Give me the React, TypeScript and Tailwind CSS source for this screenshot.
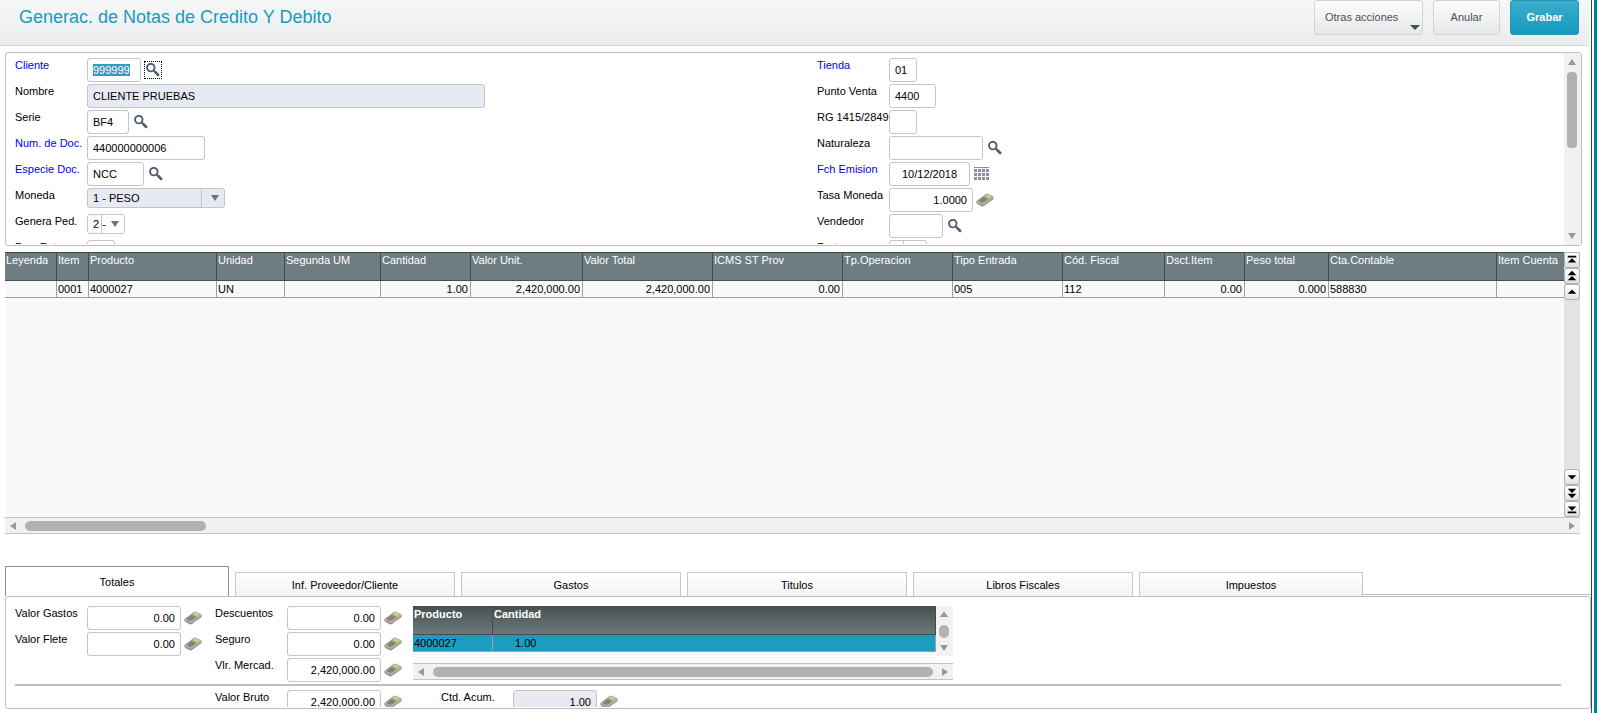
import { useEffect, useRef, useState } from "react";
import type { ReactNode } from "react";

const inputBase =
    "h-6 rounded-[3px] border border-[#c3c5c6] px-[5px] text-[11px] leading-[15px] text-black outline-none selection:bg-[#349db9] selection:text-white";

const SearchIcon = () => (
    <svg width="14" height="14" viewBox="0 0 14 14" fill="none">
        <circle cx="4.8" cy="4.6" r="3.8" stroke="#4f5b6e" strokeWidth="1.8" />
        <path d="M7.6 7.4L9.4 9.2" stroke="#4f5b6e" strokeWidth="1.8" />
        <path d="M9.2 9L12.2 12" stroke="#4f5b6e" strokeWidth="2.5" strokeLinecap="round" />
    </svg>
);

const CalendarIcon = () => (
    <svg width="16" height="14" viewBox="0 0 16 14" fill="#8b919e" shapeRendering="crispEdges">
        <rect x="0" y="0" width="15" height="1" />
        {[2, 6, 10].map((y) =>
            [0, 4, 8, 12].map((x) => <rect key={`${x}-${y}`} x={x} y={y} width="3" height="3" />)
        )}
    </svg>
);

const CalcIcon = () => (
    <svg width="18" height="14" viewBox="0 0 18 14">
        <path d="M0.4 8.2Q0.1 10.3 1.4 11L5.6 13.2Q6.8 13.7 8 12.9L16.9 6.4Q17.9 5.6 17.7 4.2L12 2Z" fill="#8a837c" />
        <path d="M0.9 7.4L9.4 1Q10.6 0.2 12 0.7L16.9 2.9Q18.1 3.5 17.1 4.4L8 11Q7 11.6 5.9 11.1L1 9Q-0.1 8.3 0.9 7.4Z" fill="#b9b0a6" />
        <path d="M1.9 7.8L7.6 3.6L12.9 6L7.1 10.1Z" fill="#948a80" />
        <path d="M8.6 3.4L11 1.6L15.8 3.7L13.2 5.5Z" fill="#9ed363" />
        <path d="M10.6 2.5L14 4" stroke="#d3f3a2" strokeWidth="1" />
        <path d="M3.4 8L7 9.5M5 6.8L8.8 8.4M6.6 5.6L10.4 7.2" stroke="#6a6058" strokeWidth="0.7" strokeDasharray="1.2 0.6" />
        <path d="M1 9.6L5.8 11.8Q7 12.3 8 11.6L16.8 5.2" stroke="#d2ccc5" strokeWidth="0.6" fill="none" />
    </svg>
);

const Arrow = ({ dir, className = "" }: { dir: "up" | "down" | "left" | "right"; className?: string }) => {
    const paths = {
        up: "M4 1L8 7H0Z",
        down: "M0 1H8L4 7Z",
        left: "M7 0V8L1 4Z",
        right: "M1 0L7 4L1 8Z",
    };
    return (
        <svg width="8" height="8" viewBox="0 0 8 8" className={`shrink-0 ${className}`}>
            <path d={paths[dir]} fill="currentColor" />
        </svg>
    );
};

interface FieldProps {
    id: string;
    label: string;
    value?: string;
    width: string;
    required?: boolean;
    align?: string;
    readOnly?: boolean;
    children?: ReactNode;
}

const Field = ({ id, label, value = "", width, required, align = "", readOnly, children }: FieldProps) => (
    <div className="flex h-6 shrink-0 items-center">
        <label
            htmlFor={id}
            className={`w-[72px] shrink-0 self-start whitespace-nowrap leading-[14px] ${required ? "text-[#0000f0]" : ""}`}
        >
            {label}
        </label>
        <input
            id={id}
            defaultValue={value}
            readOnly={readOnly}
            className={`${inputBase} ${width} ${align} ${readOnly ? "bg-[#e7eaf3]" : "bg-white"}`}
        />
        {children}
    </div>
);

interface SelectFieldProps {
    id: string;
    label: string;
    options: string[];
    width: string;
    disabled?: boolean;
}

const SelectField = ({ id, label, options, width, disabled }: SelectFieldProps) => (
    <div className="flex h-6 shrink-0">
        <label htmlFor={id} className="w-[72px] shrink-0 whitespace-nowrap leading-[14px]">
            {label}
        </label>
        <div className={`relative h-5 ${width}`}>
            <select
                id={id}
                disabled={disabled}
                className={`h-5 w-full appearance-none rounded-[3px] border border-[#c3c5c6] pl-[5px] text-[11px] text-black opacity-100 outline-none ${disabled ? "bg-[#e7eaf3]" : "bg-white"}`}
            >
                {options.map((o) => (
                    <option key={o}>{o}</option>
                ))}
            </select>
            <span className="pointer-events-none absolute inset-y-0 right-[23px] w-px bg-[#c3c5c6]" />
            <Arrow dir="down" className="pointer-events-none absolute right-[6px] top-[6px] text-[#6a7180]" />
        </div>
    </div>
);

const IconButton = ({ label, className = "ml-[5px]", children }: { label: string; className?: string; children: ReactNode }) => (
    <button type="button" aria-label={label} className={`flex shrink-0 items-center justify-center ${className}`}>
        {children}
    </button>
);

const Calc = () => (
    <IconButton label="Calculadora" className="ml-[3px]">
        <CalcIcon />
    </IconButton>
);

const Search = () => (
    <IconButton label="Buscar">
        <SearchIcon />
    </IconButton>
);

const columns = [
    { title: "Leyenda", width: "w-[52px]", value: "" },
    { title: "Item", width: "w-[32px]", value: "0001" },
    { title: "Producto", width: "w-[128px]", value: "4000027" },
    { title: "Unidad", width: "w-[68px]", value: "UN" },
    { title: "Segunda UM", width: "w-[96px]", value: "" },
    { title: "Cantidad", width: "w-[90px]", value: "1.00", right: true },
    { title: "Valor Unit.", width: "w-[112px]", value: "2,420,000.00", right: true },
    { title: "Valor Total", width: "w-[130px]", value: "2,420,000.00", right: true },
    { title: "ICMS ST Prov", width: "w-[130px]", value: "0.00", right: true },
    { title: "Tp.Operacion", width: "w-[110px]", value: "" },
    { title: "Tipo Entrada", width: "w-[110px]", value: "005" },
    { title: "Cód. Fiscal", width: "w-[102px]", value: "112" },
    { title: "Dsct.Item", width: "w-[80px]", value: "0.00", right: true },
    { title: "Peso total", width: "w-[84px]", value: "0.000", right: true },
    { title: "Cta.Contable", width: "w-[168px]", value: "588830" },
    { title: "Item Cuenta", width: "", value: "" },
];

const navIcons: Record<string, string> = {
    Primero: "M3 2h10v2H3zM8 5l5 5H3z",
    "Página anterior": "M8 1l5 5H3zM8 7l5 5H3z",
    Anterior: "M8 4l5 5H3z",
    Siguiente: "M3 5h10l-5 5z",
    "Página siguiente": "M3 2h10l-5 5zM3 8h10l-5 5z",
    "Último": "M3 4h10l-5 5zM3 10h10v2H3z",
};

const NavButton = ({ name }: { name: string }) => (
    <button
        type="button"
        aria-label={name}
        className="flex h-4 w-4 items-center justify-center rounded-[3px] border border-[#b0b0b0] bg-linear-to-b from-white to-[#e2e2e2]"
    >
        <svg width="12" height="12" viewBox="1 0 14 14">
            <path d={navIcons[name]} fill="#000" />
        </svg>
    </button>
);

const tabs = [
    { name: "Totales", width: "w-[224px]" },
    { name: "Inf. Proveedor/Cliente", width: "w-[220px]" },
    { name: "Gastos", width: "w-[220px]" },
    { name: "Titulos", width: "w-[220px]" },
    { name: "Libros Fiscales", width: "w-[220px]" },
    { name: "Impuestos", width: "w-[224px]" },
];

const App = () => {

    const [tab, setTab] = useState("Totales");
    const clienteRef = useRef<HTMLInputElement>(null);

    useEffect(() => {
        clienteRef.current?.focus();
        clienteRef.current?.select();
    }, []);

    return (
        <div className="flex h-screen overflow-hidden bg-white font-['Liberation_Sans',Arial,sans-serif] text-[11px] text-black">

            <main className="flex min-w-0 flex-1 flex-col">

                <header className="mr-[2px] flex h-[46px] shrink-0 items-start justify-between border-b border-[#d5d6d7] bg-linear-to-b from-[#f6f7f7] to-[#ebecee] pl-[19px] pr-[10px]">
                    <h1 className="pt-[5px] text-[18px] leading-6 text-[#179bbf]">
                        Generac. de Notas de Credito Y Debito
                    </h1>
                    <div className="flex gap-[10px]">
                        <button type="button" className="relative h-[35px] w-[109px] rounded-[3px] border border-[#d0d2d4] bg-linear-to-b from-[#fdfdfd] to-[#e6e7e8] pl-[10px] text-left text-[#4c5057]">
                            Otras acciones
                            <svg width="10" height="5" viewBox="0 0 10 5" className="absolute bottom-1 right-[2px]">
                                <path d="M0 0H10L5 5Z" fill="#454b57" />
                            </svg>
                        </button>
                        <button type="button" className="h-[35px] w-[67px] rounded-[3px] border border-[#d0d2d4] bg-linear-to-b from-[#fdfdfd] to-[#e6e7e8] text-[#4c5057]">
                            Anular
                        </button>
                        <button type="button" className="h-[35px] w-[69px] rounded-[3px] border border-[#2196b6] bg-linear-to-b from-[#3aadcb] to-[#0f9bbf] font-bold text-white">
                            Grabar
                        </button>
                    </div>
                </header>

                <section className="ml-[5px] mr-[9px] mt-[6px] flex h-[194px] shrink-0 rounded-[3px] border border-[#bfbfbf]">
                    <div className="grid min-w-0 flex-1 grid-cols-[802fr_747fr] overflow-hidden pl-[9px] pt-[5px]">
                        <div className="flex h-[186px] flex-col gap-[2px] overflow-hidden">
                            <div className="flex h-6 shrink-0 items-center">
                                <label htmlFor="cliente" className="w-[72px] shrink-0 self-start leading-[14px] text-[#0000f0]">
                                    Cliente
                                </label>
                                <input id="cliente" ref={clienteRef} defaultValue="999999" className={`${inputBase} w-[54px] bg-white`} />
                                <IconButton label="Buscar" className="ml-[3px] h-[18px] w-[18px] border border-dotted border-black">
                                    <SearchIcon />
                                </IconButton>
                            </div>
                            <Field id="nombre" label="Nombre" value="CLIENTE PRUEBAS" width="w-[398px]" readOnly />
                            <Field id="serie" label="Serie" value="BF4" width="w-[42px]"><Search /></Field>
                            <Field id="numdoc" label="Num. de Doc." value="440000000006" width="w-[118px]" required />
                            <Field id="especie" label="Especie Doc." value="NCC" width="w-[57px]" required><Search /></Field>
                            <SelectField id="moneda" label="Moneda" options={["1 - PESO"]} width="w-[138px]" disabled />
                            <SelectField id="generaped" label="Genera Ped." options={["2 - "]} width="w-[38px]" />
                            <Field id="prov" label="Prov.Entrega" width="w-[28px]" />
                        </div>
                        <div className="flex h-[186px] flex-col gap-[2px] overflow-hidden">
                            <Field id="tienda" label="Tienda" value="01" width="w-[28px]" required />
                            <Field id="punto" label="Punto Venta" value="4400" width="w-[47px]" />
                            <Field id="rg" label="RG 1415/2849" width="w-[28px]" />
                            <Field id="naturaleza" label="Naturaleza" width="w-[94px]"><Search /></Field>
                            <Field id="fecha" label="Fch Emision" value="10/12/2018" width="w-[81px]" align="text-center" required>
                                <IconButton label="Calendario" className="ml-1"><CalendarIcon /></IconButton>
                            </Field>
                            <Field id="tasa" label="Tasa Moneda" value="1.0000" width="w-[84px]" align="text-right"><Calc /></Field>
                            <Field id="vendedor" label="Vendedor" width="w-[54px]"><Search /></Field>
                            <SelectField id="factura" label="Factura" options={[""]} width="w-[38px]" />
                        </div>
                    </div>
                    <div className="flex w-[17px] shrink-0 flex-col items-center bg-[#f1f1f1] py-[5px] pr-px text-[#999]">
                        <Arrow dir="up" />
                        <div className="mt-[6px] h-[76px] w-[10px] rounded-[4px] bg-[#b1b1b1]" />
                        <Arrow dir="down" className="mt-auto" />
                    </div>
                </section>

                <section className="ml-[5px] mr-[11px] mt-[6px] flex min-h-[160px] flex-1 flex-col">
                    <div className="flex min-h-0 flex-1">
                        <div className="min-w-0 flex-1 overflow-hidden bg-[#f9f9f9]">
                            <table className="w-full table-fixed border-separate border-spacing-0">
                                <thead>
                                    <tr className="h-[29px]">
                                        {columns.map((c) => (
                                            <th
                                                key={c.title}
                                                className={`${c.width} overflow-hidden whitespace-nowrap border-y border-r border-[#464d50] bg-[#6e7d82] p-0 pl-px text-left align-top font-normal leading-[14px] text-white last:border-r-0`}
                                            >
                                                {c.title}
                                            </th>
                                        ))}
                                    </tr>
                                </thead>
                                <tbody>
                                    <tr className="h-[17px]">
                                        {columns.map((c) => (
                                            <td
                                                key={c.title}
                                                className={`border-b border-r border-[#a0a0a0] p-0 pl-px leading-4 last:border-r-0 ${c.right ? "pr-[2px] text-right" : ""}`}
                                            >
                                                {c.value}
                                            </td>
                                        ))}
                                    </tr>
                                </tbody>
                            </table>
                        </div>
                        <div className="flex w-4 shrink-0 flex-col bg-[#e3e3e3]">
                            <NavButton name="Primero" />
                            <NavButton name="Página anterior" />
                            <NavButton name="Anterior" />
                            <div className="flex-1" />
                            <NavButton name="Siguiente" />
                            <NavButton name="Página siguiente" />
                            <NavButton name="Último" />
                        </div>
                    </div>
                    <div className="flex h-[17px] shrink-0 items-center border-y border-[#c3c3c3] bg-[#f1f1f1] px-1 text-[#999]">
                        <Arrow dir="left" />
                        <div className="ml-2 h-[10px] w-[181px] rounded-[5px] bg-[#b1b1b1]" />
                        <Arrow dir="right" className="ml-auto" />
                    </div>
                </section>

                <nav role="tablist" className="ml-[5px] mt-8 flex h-[30px] shrink-0 items-end gap-[6px]">
                    {tabs.map((t) => (
                        <button
                            key={t.name}
                            type="button"
                            role="tab"
                            aria-selected={t.name === tab}
                            onClick={() => setTab(t.name)}
                            className={`border border-b-0 pt-[2px] ${t.width} ${t.name === tab ? "h-[30px] border-[#8f8f8f] bg-white" : "h-6 border-[#c8c8c8] bg-linear-to-b from-white to-[#f3f3f3]"}`}
                        >
                            {t.name}
                        </button>
                    ))}
                    <div className="-ml-[6px] h-[2px] flex-1 border-t border-[#c0c0c0]" />
                </nav>

                <section className="mb-[4px] ml-[5px] flex h-[113px] shrink-0 flex-col overflow-hidden rounded-[3px] border border-[#bfbfbf] pl-[9px] pt-[9px]">
                    <div className="flex h-[78px] shrink-0">
                        <div className="flex w-[200px] shrink-0 flex-col gap-[2px]">
                            <Field id="gastos" label="Valor Gastos" value="0.00" width="w-[94px]" align="text-right"><Calc /></Field>
                            <Field id="flete" label="Valor Flete" value="0.00" width="w-[94px]" align="text-right"><Calc /></Field>
                        </div>
                        <div className="flex w-[198px] shrink-0 flex-col gap-[2px]">
                            <Field id="descuentos" label="Descuentos" value="0.00" width="w-[94px]" align="text-right"><Calc /></Field>
                            <Field id="seguro" label="Seguro" value="0.00" width="w-[94px]" align="text-right"><Calc /></Field>
                            <Field id="mercad" label="Vlr. Mercad." value="2,420,000.00" width="w-[94px]" align="text-right"><Calc /></Field>
                        </div>
                        <div className="flex h-[74px] w-[540px] flex-col">
                            <div className="flex flex-1">
                                <div className="flex-1 bg-[#f9f9f9]">
                                    <table className="w-full table-fixed border-separate border-spacing-0">
                                        <thead>
                                            <tr className="h-[29px] bg-linear-to-b from-[#48504f] to-[#6d7b7f] text-left text-white">
                                                <th className="w-20 border-y border-r border-[#464a4c] p-0 pl-px align-top leading-[14px]">Producto</th>
                                                <th className="border-y border-r border-[#464a4c] p-0 pl-px align-top leading-[14px]">Cantidad</th>
                                            </tr>
                                        </thead>
                                        <tbody>
                                            <tr className="h-[17px] bg-[#1c9dbf]">
                                                <td className="border-b border-r border-[#a0a0a0] p-0 pl-px leading-4">4000027</td>
                                                <td className="border-b border-r border-[#a0a0a0] p-0 pl-[22px] leading-4">1.00</td>
                                            </tr>
                                        </tbody>
                                    </table>
                                </div>
                                <div className="flex h-[50px] w-[17px] shrink-0 flex-col items-center justify-between bg-[#f1f1f1] py-1 pr-px text-[#999]">
                                    <Arrow dir="up" />
                                    <div className="h-[13px] w-[10px] rounded-[5px] bg-[#b1b1b1]" />
                                    <Arrow dir="down" />
                                </div>
                            </div>
                            <div className="flex h-[17px] shrink-0 items-center gap-2 border-y border-[#c3c3c3] bg-[#f1f1f1] px-1 text-[#999]">
                                <Arrow dir="left" />
                                <div className="h-[10px] flex-1 rounded-[5px] bg-[#b1b1b1]" />
                                <Arrow dir="right" />
                            </div>
                        </div>
                    </div>
                    <hr className="mr-[29px] h-[2px] shrink-0 border-0 bg-[#c0c0c0]" />
                    <div className="mt-1 flex h-[17px] shrink-0 overflow-hidden pl-[200px]">
                        <div className="w-[226px] shrink-0">
                            <Field id="bruto" label="Valor Bruto" value="2,420,000.00" width="w-[94px]" align="text-right"><Calc /></Field>
                        </div>
                        <Field id="acum" label="Ctd. Acum." value="1.00" width="w-[84px]" align="text-right" readOnly><Calc /></Field>
                    </div>
                </section>

            </main>

            <div className="w-[6px] shrink-0 border-l border-r-[3px] border-l-[#1d4a70] border-r-[#0a7a90]" />

        </div>
    );
};

export default App;
